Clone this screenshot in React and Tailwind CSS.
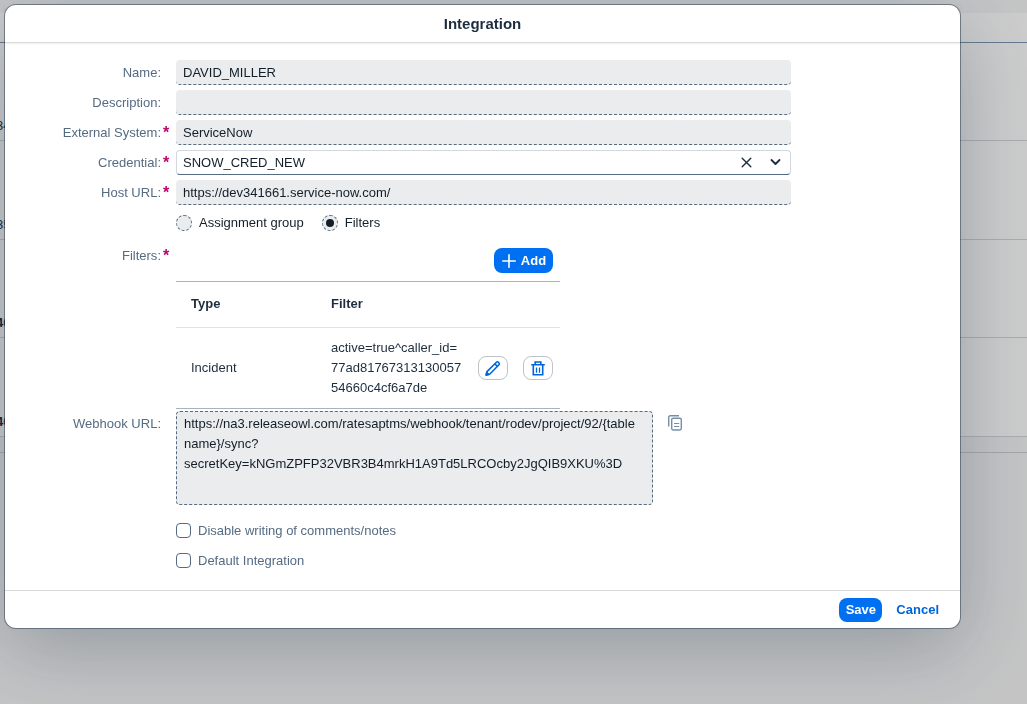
import { useState } from 'react';

const backdropRows = [
  { id: '34', height: 'h-[98px]', weight: 'font-normal' },
  { id: '35', height: 'h-[99px]', weight: 'font-normal' },
  { id: '40', height: 'h-[98px]', weight: 'font-bold' },
  { id: '40', height: 'h-[99px]', weight: 'font-bold' },
];

function BackdropPage() {
  return (
    <div aria-hidden="true" className="min-h-screen bg-[#f5f6f7] pt-[13px]">
      <div className="h-[30px] border-b border-[#8396b4] bg-white" />
      {backdropRows.map((row, i) => (
        <div
          key={i}
          className={`flex items-end border-b border-[#d5d8db] bg-white pb-1 text-[13px] text-[#1d2d3e] ${row.height} ${row.weight}`}
        >
          <span className="-ml-1">{row.id}</span>
        </div>
      ))}
      <div className="h-4 border-b border-[#cdd1d5] bg-[#f5f6f7]" />
    </div>
  );
}

function Row({ label, htmlFor, required, tall, children }) {
  return (
    <div className="grid grid-cols-[171px_minmax(0,1fr)] items-start">
      <div className={`flex items-center text-[#556b82] ${tall ? 'h-[31px]' : 'h-[25px]'}`}>
        {label && (
          <>
            <label htmlFor={htmlFor} className="grow text-right">
              {label}:
            </label>
            <span className="w-[15px] pl-0.5 text-base leading-4 font-bold text-[#ba066c]">{required ? '*' : ''}</span>
          </>
        )}
      </div>
      {children}
    </div>
  );
}

function ReadOnlyField({ id, label, value, required }) {
  return (
    <Row label={label} htmlFor={id} required={required}>
      <input
        id={id}
        type="text"
        readOnly
        value={value}
        className="h-[25px] w-full rounded-[4px] border-b border-dashed border-[#556b82] bg-[#eaecee] px-[7px] text-[#131e29] outline-none"
      />
    </Row>
  );
}

function Radio({ label, checked, onChange }) {
  return (
    <label className="flex items-center gap-[7px] text-[#131e29]">
      <input type="radio" name="scope" checked={checked} onChange={onChange} className="peer sr-only" />
      <span className="flex size-4 items-center justify-center rounded-full border border-dashed border-[#556b82] bg-[#eaecee] after:size-2 after:rounded-full after:bg-transparent peer-checked:after:bg-[#131e29]" />
      {label}
    </label>
  );
}

function Checkbox({ label }) {
  return (
    <Row>
      <label className="flex h-[25px] items-center gap-[7px] text-[#556b82]">
        <input
          type="checkbox"
          className="size-[15px] appearance-none rounded-[4px] border border-[#556b82] bg-white checked:bg-[#0070f2]"
        />
        {label}
      </label>
    </Row>
  );
}

function PencilIcon() {
  return (
    <svg width="16" height="16" viewBox="0 0 16 16" fill="none" stroke="currentColor" strokeWidth="1.6" strokeLinejoin="round">
      <path d="M1.2 14.9 2 11.6 11.4 2.2a1.3 1.3 0 0 1 1.8 0l.8.8a1.3 1.3 0 0 1 0 1.8L4.6 14.2Z" />
      <path d="m9.8 3.8 2.6 2.6" />
      <path d="m.8 15.4.8-3.6 2.8 2.8Z" fill="currentColor" strokeWidth="1" />
    </svg>
  );
}

function TrashIcon() {
  return (
    <svg width="16" height="16" viewBox="0 0 16 16" fill="none" stroke="currentColor" strokeWidth="1.6">
      <path d="M1.2 4.8h13.6M5.2 4.5V2h5.6v2.5M3.3 4.8v10h9.4v-10" />
      <path d="M6.5 7.5v5.2M9.5 7.5v5.2" strokeWidth="1.3" />
    </svg>
  );
}

function CopyIcon() {
  return (
    <svg width="16" height="16" viewBox="0 0 16 16" fill="none" stroke="currentColor" strokeWidth="1.4">
      <path d="M.7 11.5V2.4A1.6 1.6 0 0 1 2.3.8H11" />
      <rect x="3.7" y="3.2" width="9.6" height="11.8" rx="1.4" />
      <path d="M6 8.5h5.2M6 11.5h5.2" strokeWidth="1" />
    </svg>
  );
}

const iconButton =
  'inline-flex h-6 w-[30px] items-center justify-center rounded-lg border border-[#bcc3ca] bg-white text-[#0064d9]';

export default function App() {
  const [credential, setCredential] = useState('SNOW_CRED_NEW');
  const [scope, setScope] = useState('filters');

  return (
    <div className="font-['Liberation_Sans',Arial,sans-serif] text-[13px] leading-5">
      <BackdropPage />
      <div className="fixed inset-0 overflow-auto bg-black/20 pt-[5px] pr-[67px] pb-5 pl-[5px]">
        <section
          role="dialog"
          aria-labelledby="dialog-title"
          className="rounded-[11px] bg-white shadow-[0_0_0_1px_rgba(34,53,72,0.5),0_20px_80px_0_rgba(34,53,72,0.3)]"
        >
          <header className="flex h-[38px] items-center justify-center border-b border-[#d9d9d9] shadow-[0_1px_2px_rgba(34,53,72,0.08)]">
            <h2 id="dialog-title" className="text-[15px] font-bold text-[#1d2d3e]">
              Integration
            </h2>
          </header>

          <form className="pt-[17px] pr-[169px] pb-[17px]">
            <div className="flex flex-col gap-[5px]">
              <ReadOnlyField id="name" label="Name" value="DAVID_MILLER" />
              <ReadOnlyField id="description" label="Description" value="" />
              <ReadOnlyField id="system" label="External System" value="ServiceNow" required />

              <Row label="Credential" htmlFor="credential" required>
                <div className="flex h-[25px] items-center rounded-[4px] border border-[#d0d8e0] border-b-[#556b82] bg-white">
                  <input
                    id="credential"
                    type="text"
                    role="combobox"
                    aria-expanded="false"
                    value={credential}
                    onChange={(e) => setCredential(e.target.value)}
                    className="min-w-0 grow px-1.5 text-[#131e29] outline-none"
                  />
                  <button type="button" aria-label="Clear" onClick={() => setCredential('')} className="flex w-[29px] justify-center text-[#1d2d3e]">
                    <svg width="11" height="11" viewBox="0 0 11 11" fill="none" stroke="currentColor" strokeWidth="1.4" strokeLinecap="round">
                      <path d="m1.2 1.2 8.6 8.6m0-8.6L1.2 9.8" />
                    </svg>
                  </button>
                  <button type="button" aria-label="Open list" className="flex w-[29px] justify-center text-[#1d2d3e]">
                    <svg width="11" height="11" viewBox="0 0 11 11" fill="none" stroke="currentColor" strokeWidth="1.8" strokeLinecap="round" strokeLinejoin="round">
                      <path d="m1.5 3 4 4 4-4" />
                    </svg>
                  </button>
                </div>
              </Row>

              <ReadOnlyField id="host" label="Host URL" value="https://dev341661.service-now.com/" required />

              <Row>
                <div className="flex h-[25px] items-center gap-[18px]">
                  <Radio label="Assignment group" checked={scope === 'group'} onChange={() => setScope('group')} />
                  <Radio label="Filters" checked={scope === 'filters'} onChange={() => setScope('filters')} />
                </div>
              </Row>

              <Row label="Filters" required tall>
                <div className="w-96">
                  <div className="flex h-[41px] items-center justify-end pr-[7px]">
                    <button type="button" className="flex h-[25px] w-[59px] items-center justify-center gap-1 rounded-lg bg-[#0070f2] font-bold text-white">
                      <svg width="16" height="16" viewBox="0 0 16 16" fill="none" stroke="currentColor" strokeWidth="1.6" strokeLinecap="round">
                        <path d="M8 1.8v12.4M1.8 8h12.4" />
                      </svg>
                      Add
                    </button>
                  </div>
                  <table className="w-full table-fixed border-collapse border-y border-[#a8b3bd] text-left text-[#1d2d3e]">
                    <thead>
                      <tr className="h-[46px] border-b border-[#e0e2e5]">
                        <th scope="col" className="w-[155px] pb-0.5 pl-[15px]">Type</th>
                        <th scope="col" className="pb-0.5">Filter</th>
                        <th scope="col" className="w-[82px]" aria-label="Actions" />
                      </tr>
                    </thead>
                    <tbody>
                      <tr className="h-[81px]">
                        <td className="pl-[15px]">Incident</td>
                        <td className="pr-4 break-all">active=true^caller_id=77ad8176731313005754660c4cf6a7de</td>
                        <td>
                          <div className="flex gap-[15px]">
                            <button type="button" aria-label="Edit" className={iconButton}>
                              <PencilIcon />
                            </button>
                            <button type="button" aria-label="Delete" className={iconButton}>
                              <TrashIcon />
                            </button>
                          </div>
                        </td>
                      </tr>
                    </tbody>
                  </table>
                </div>
              </Row>
            </div>

            <div className="pt-0.5">
              <Row label="Webhook URL" htmlFor="webhook">
                <div className="flex items-start gap-[15px]">
                  <textarea
                    id="webhook"
                    readOnly
                    value="https://na3.releaseowl.com/ratesaptms/webhook/tenant/rodev/project/92/{table name}/sync?secretKey=kNGmZPFP32VBR3B4mrkH1A9Td5LRCOcby2JgQIB9XKU%3D"
                    className="h-[94px] w-[477px] resize-none rounded-[4px] border border-dashed border-[#556b82] bg-[#eaecee] px-[7px] pt-0.5 text-[#131e29] outline-none"
                  />
                  <button type="button" aria-label="Copy" className="pt-1 text-[#788fa6]">
                    <CopyIcon />
                  </button>
                </div>
              </Row>
            </div>

            <div className="flex flex-col gap-[5px] pt-[13px]">
              <Checkbox label="Disable writing of comments/notes" />
              <Checkbox label="Default Integration" />
            </div>
          </form>

          <footer className="flex h-[38px] items-center justify-end gap-2 border-t border-[#d9d9d9] pr-[15px]">
            <button type="button" className="h-6 w-[43px] rounded-lg bg-[#0070f2] font-bold text-white">
              Save
            </button>
            <button type="button" className="h-6 rounded-lg px-1.5 font-bold text-[#0064d9]">
              Cancel
            </button>
          </footer>
        </section>
      </div>
    </div>
  );
}
